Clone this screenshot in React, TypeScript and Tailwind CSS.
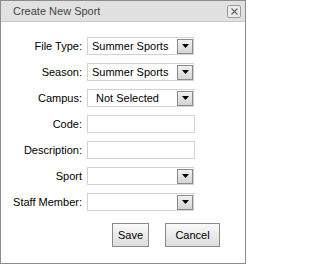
import React from "react";

const font = { fontFamily: '"Liberation Sans", Arial, sans-serif' };

function Caret() {
   return (
      <span className="flex h-[15px] w-[16px] items-center justify-center border border-[#8a8a8a] bg-gradient-to-b from-[#f2f2f2] to-[#d4d4d4]">
         <svg width="7" height="4" viewBox="0 0 7 4">
            <path d="M0 0h7L3.5 4z" fill="#000" />
         </svg>
      </span>
   );
}

function Select({ value, pad = "pl-[4px]" }: { value?: string; pad?: string }) {
   return (
      <div className="flex h-[18px] w-[107px] items-center border border-[#d2d2d2] bg-white pr-[0px]">
         <span className={`flex-1 truncate text-[11px] leading-none text-black ${pad}`}>{value}</span>
         <Caret />
      </div>
   );
}

function Input() {
   return <div className="h-[18px] w-[108px] border border-[#d2d2d2] bg-white" />;
}

function Row({ label, children }: { label: string; children: React.ReactNode }) {
   return (
      <div className="flex items-center">
         <label className="w-[82px] pr-[1px] text-right text-[11px] leading-none text-black">{label}</label>
         <div className="ml-[4px]">{children}</div>
      </div>
   );
}

export default function App() {
   return (
      <div style={font} className="h-[265px] w-[247px] bg-white">
         <div className="flex h-[264px] w-[246px] flex-col border border-[#8c8c8c] bg-white">
            <header className="flex h-[21px] items-center justify-between border-b border-[#c8c8c8] bg-[#e1e1e1] pl-[12px] pr-[4px]">
               <h1 className="text-[11px] leading-none text-[#444]">Create New Sport</h1>
               <button className="flex h-[13px] w-[14px] items-center justify-center rounded-[2px] border border-[#9a9a9a] bg-[#ececec]">
                  <svg width="7" height="7" viewBox="0 0 7 7">
                     <path d="M0.5 0.5l6 6M6.5 0.5l-6 6" stroke="#666" strokeWidth="1.2" />
                  </svg>
               </button>
            </header>
            <div className="flex flex-col gap-[8px] pt-[15px]">
               <Row label="File Type:">
                  <Select value="Summer Sports" />
               </Row>
               <Row label="Season:">
                  <Select value="Summer Sports" />
               </Row>
               <Row label="Campus:">
                  <Select value="Not Selected" pad="pl-[8px]" />
               </Row>
               <Row label="Code:">
                  <Input />
               </Row>
               <Row label="Description:">
                  <Input />
               </Row>
               <Row label="Sport">
                  <Select />
               </Row>
               <Row label="Staff Member:">
                  <Select />
               </Row>
            </div>
            <div className="mt-[12px] flex justify-end gap-[16px] pr-[25px]">
               <button className="h-[24px] w-[37px] border border-[#8a8a8a] bg-gradient-to-b from-[#fafafa] to-[#dcdcdc] text-[11px] text-black">
                  Save
               </button>
               <button className="h-[24px] w-[55px] border border-[#8a8a8a] bg-gradient-to-b from-[#fafafa] to-[#dcdcdc] text-[11px] text-black">
                  Cancel
               </button>
            </div>
         </div>
      </div>
   );
}
